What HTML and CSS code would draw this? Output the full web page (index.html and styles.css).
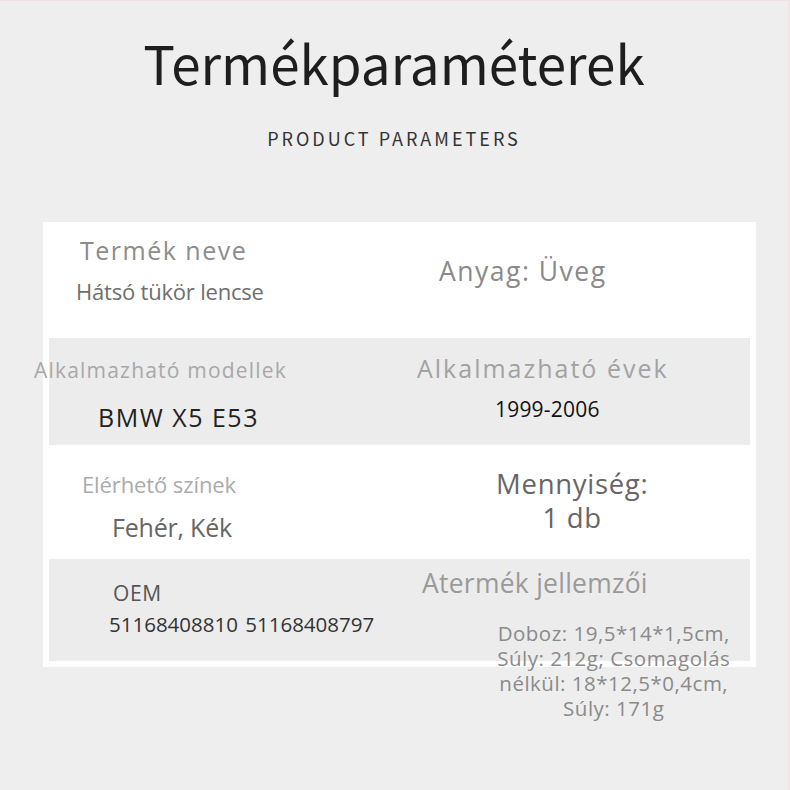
FILE: index.html
```html
<!DOCTYPE html>
<html lang="hu">
<head>
<meta charset="utf-8">
<title>Termékparaméterek</title>
<link rel="stylesheet" href="styles.css">
</head>
<body>
  <header class="head">
    <h1 class="title">Termékparaméterek</h1>
    <p class="subtitle">PRODUCT PARAMETERS</p>
  </header>
  <section class="card">
    <div class="row row-1">
      <div class="cell">
        <div class="name-label">Termék neve</div>
        <div class="name-value">Hátsó tükör lencse</div>
      </div>
      <div class="cell">
        <div class="material">Anyag: Üveg</div>
      </div>
    </div>
    <div class="row row-2 shaded">
      <div class="cell">
        <div class="models-label">Alkalmazható modellek</div>
        <div class="models-value">BMW X5 E53</div>
      </div>
      <div class="cell">
        <div class="years-label">Alkalmazható évek</div>
        <div class="years-value">1999-2006</div>
      </div>
    </div>
    <div class="row row-3">
      <div class="cell">
        <div class="colors-label">Elérhető színek</div>
        <div class="colors-value">Fehér, Kék</div>
      </div>
      <div class="cell">
        <div class="quantity">Mennyiség:<br>1 db</div>
      </div>
    </div>
    <div class="row row-4 shaded">
      <div class="cell">
        <div class="oem-label">OEM</div>
        <div class="oem-value">51168408810 51168408797</div>
      </div>
      <div class="cell">
        <div class="features-label">Atermék jellemzői</div>
        <div class="features-value">Doboz: 19,5*14*1,5cm,<br>Súly: 212g; Csomagolás<br>nélkül: 18*12,5*0,4cm,<br>Súly: 171g</div>
      </div>
    </div>
  </section>
</body>
</html>
```

FILE: styles.css
```css
* { box-sizing: border-box; }

html, body { margin: 0; padding: 0; }

body {
  width: 790px;
  min-height: 790px;
  background: #eeeeee;
  border-top: 1px solid #f4e2e3;
  border-right: 2px solid #f3e3e4;
  font-family: "Open Sans", "Noto Sans", sans-serif;
  line-height: 1;
}

.head {
  padding-top: 35.4px;
  text-align: center;
  font-family: "Noto Sans CJK SC", "Noto Sans", sans-serif;
}

.title {
  margin: 0;
  font-size: 53px;
  font-weight: 400;
  line-height: 1;
  color: #1e1e1e;
}

.subtitle {
  margin: 39.4px 0 0;
  font-size: 18px;
  line-height: 1;
  letter-spacing: 3px;
  color: #333333;
}

.card {
  margin: 75px 0 0 43px;
  width: 713px;
  padding: 0 6px 6px;
  background: #ffffff;
}

.row {
  display: grid;
  grid-template-columns: 1fr 1fr;
}

.shaded { background: #ececec; }

.row-1 { height: 116px; }
.row-2 { height: 107px; }
.row-3 { height: 114px; }
.row-4 { height: 102px; }

.cell { min-width: 0; white-space: nowrap; }

/* row 1 */
.name-label {
  margin: 15.8px 0 0 31px;
  font-size: 25px;
  letter-spacing: 1.5px;
  color: #8c8c8c;
}
.name-value {
  margin: 17.7px 0 0 27px;
  font-size: 22px;
  letter-spacing: -0.2px;
  color: #6e6e6e;
}
.material {
  margin: 36.5px 0 0 39.5px;
  font-size: 26.5px;
  letter-spacing: 1.5px;
  color: #8a8a8a;
}

/* row 2 */
.models-label {
  margin: 22.4px 0 0 -15px;
  font-size: 21px;
  letter-spacing: 1.2px;
  color: #a8a8a8;
}
.models-value {
  margin: 23.4px 0 0 49px;
  font-size: 25px;
  letter-spacing: 1.5px;
  color: #222222;
}
.years-label {
  margin: 17.8px 0 0 17.5px;
  font-size: 25px;
  letter-spacing: 2px;
  color: #a2a2a2;
}
.years-value {
  margin: 18.6px 0 0 95.5px;
  font-size: 21px;
  letter-spacing: 0.2px;
  color: #111111;
}

/* row 3 */
.colors-label {
  margin: 28.5px 0 0 33px;
  font-size: 22px;
  letter-spacing: -0.1px;
  color: #ababab;
}
.colors-value {
  margin: 19.3px 0 0 63px;
  font-size: 25px;
  letter-spacing: -0.2px;
  color: #666666;
}
.quantity {
  margin-top: 22.3px;
  padding-right: 5px;
  text-align: center;
  font-size: 27.5px;
  line-height: 34px;
  letter-spacing: 0.7px;
  color: #666666;
}

/* row 4 */
.oem-label {
  margin: 24.4px 0 0 64px;
  font-size: 21px;
  letter-spacing: 0.6px;
  color: #555555;
}
.oem-value {
  margin: 9.4px 0 0 60px;
  font-size: 20.5px;
  word-spacing: 2px;
  color: #333333;
}
.features-label {
  margin: 11.5px 0 0 22.5px;
  font-size: 26.5px;
  letter-spacing: 0.25px;
  color: #9a9a9a;
}
.features-value {
  margin-top: 24.5px;
  padding-left: 78px;
  text-align: center;
  font-size: 20.5px;
  line-height: 25px;
  letter-spacing: 0.5px;
  color: #8a8a8a;
}
```
